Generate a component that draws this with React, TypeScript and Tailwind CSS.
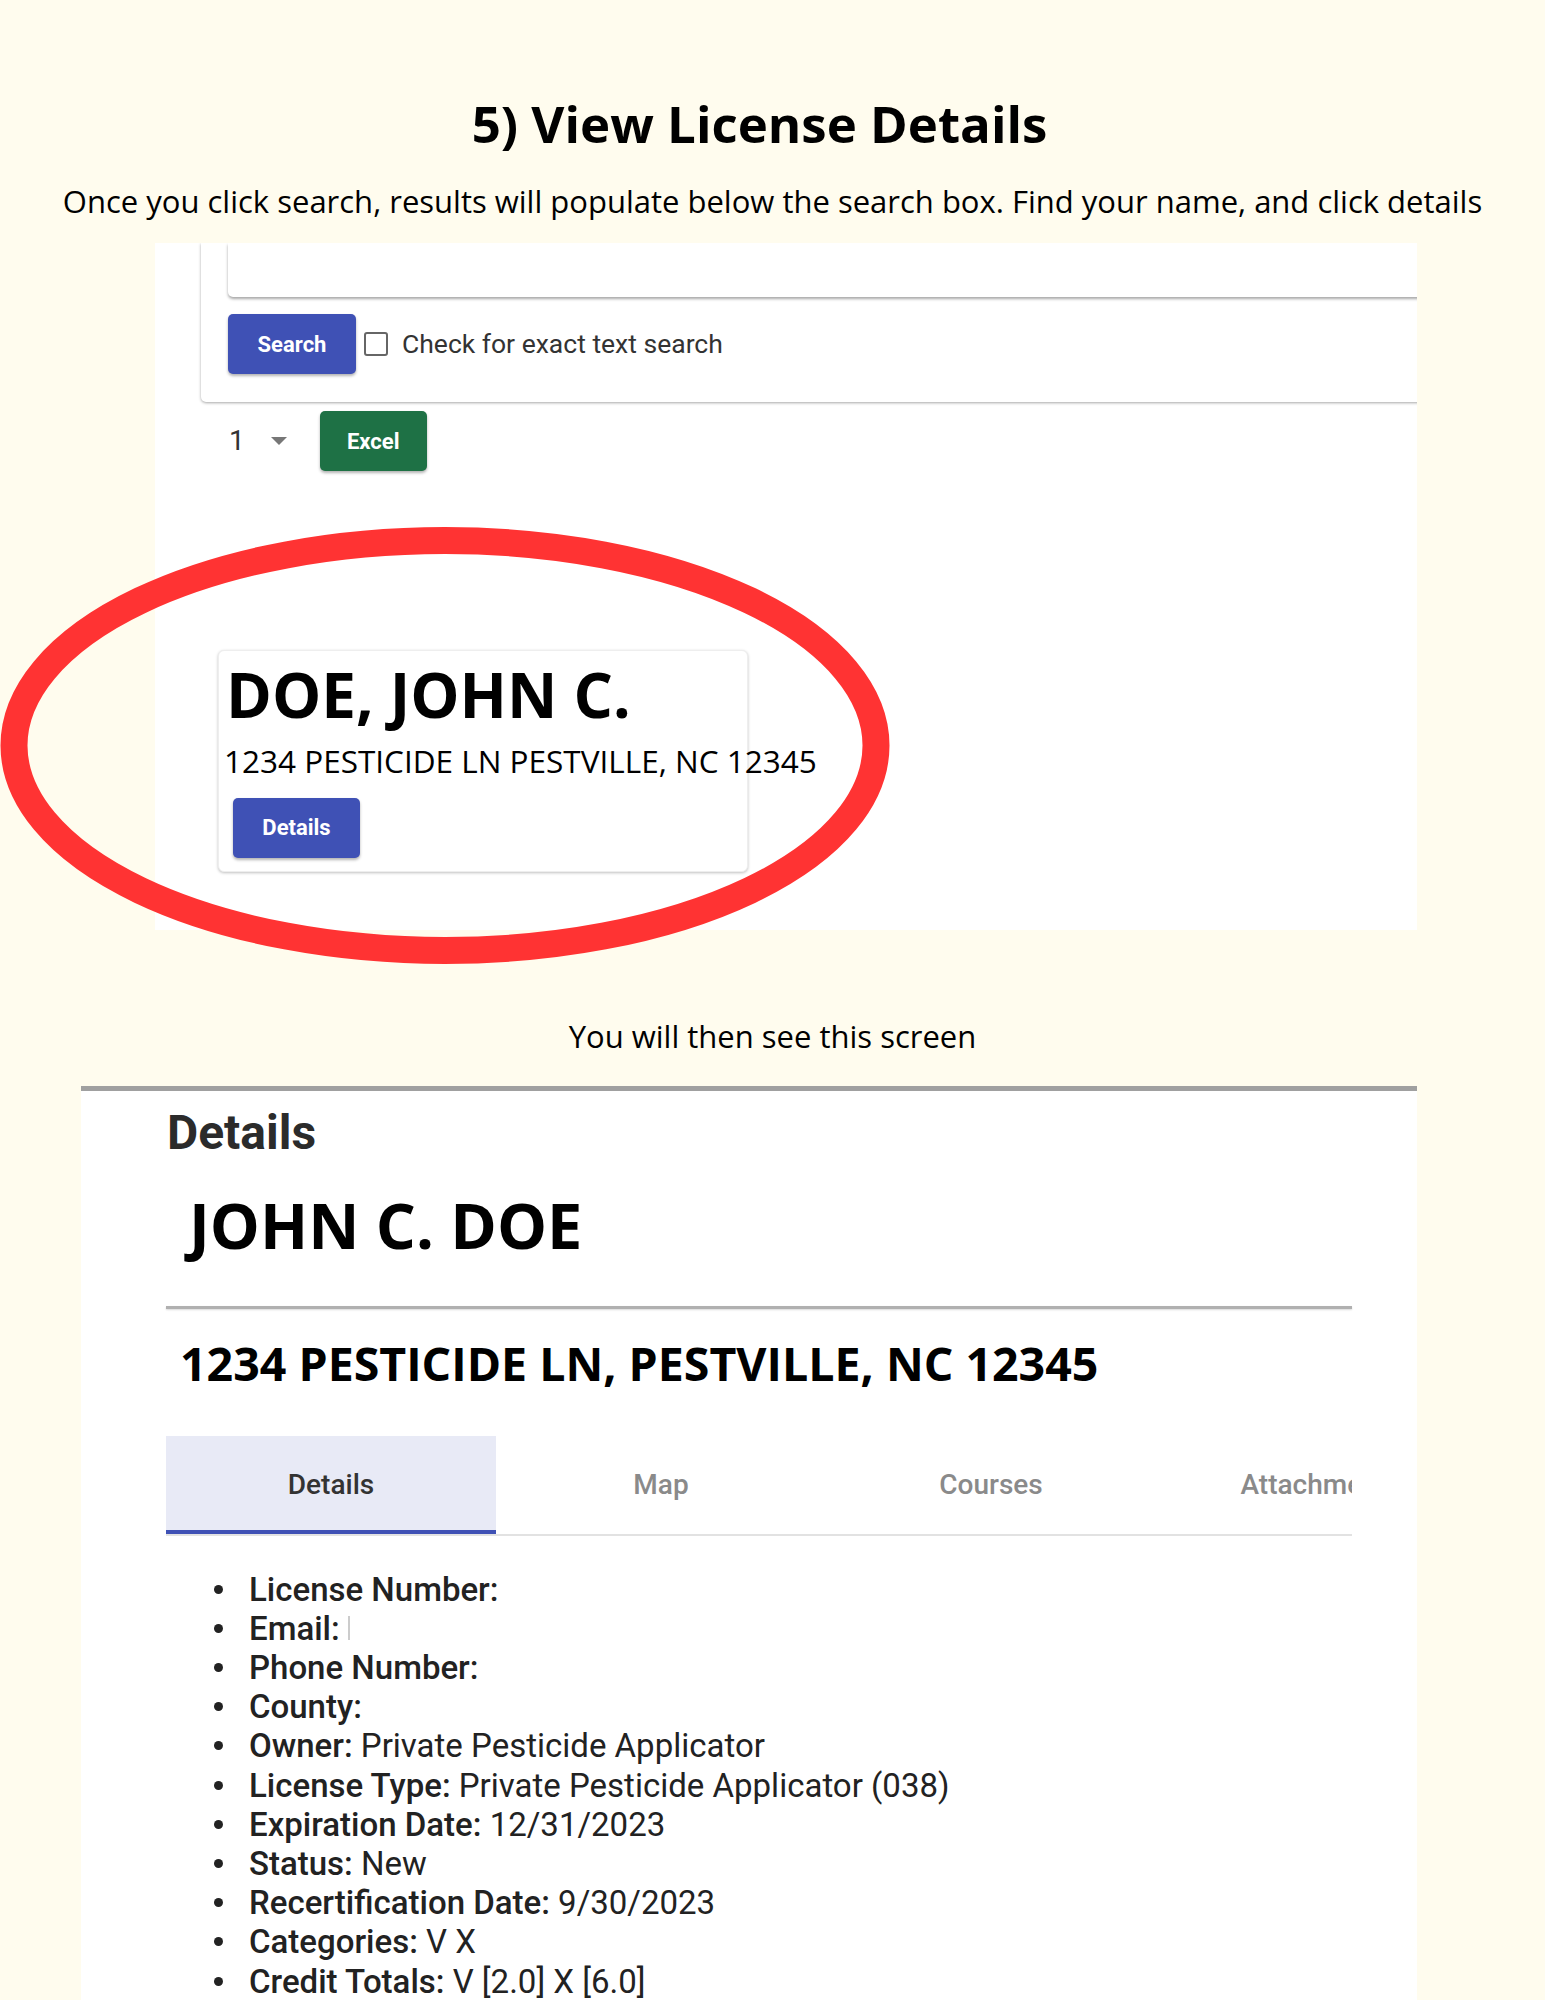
import React from "react";

const details: { label: string; value?: string; cursor?: boolean }[] = [
  { label: "License Number:" },
  { label: "Email:", cursor: true },
  { label: "Phone Number:" },
  { label: "County:" },
  { label: "Owner:", value: "Private Pesticide Applicator" },
  { label: "License Type:", value: "Private Pesticide Applicator (038)" },
  { label: "Expiration Date:", value: "12/31/2023" },
  { label: "Status:", value: "New" },
  { label: "Recertification Date:", value: "9/30/2023" },
  { label: "Categories:", value: "V X" },
  { label: "Credit Totals:", value: "V [2.0] X [6.0]" },
];

const tabs = ["Details", "Map", "Courses", "Attachments"];

function SearchScreenshot() {
  return (
    <div className="ml-[155px] w-[1262px] h-[687px] bg-white overflow-hidden font-['Roboto',sans-serif]">
      {/* search card, top cropped off */}
      <div className="ml-[46px] w-[1300px] rounded-b-[5px] bg-white pb-[28px] shadow-[0_1px_3px_rgba(0,0,0,0.35)]">
        <div className="ml-[27px] h-[54px] rounded-b-[5px] bg-white shadow-[0_2px_3px_rgba(0,0,0,0.35)]" />
        <div className="ml-[27px] mt-[17px] flex h-[60px] items-center">
          <button className="h-[60px] w-[128px] rounded-[5px] bg-[#3f51b5] text-[22px] font-bold text-white shadow-[0_2px_3px_rgba(0,0,0,0.3)]">
            Search
          </button>
          <span className="ml-[8px] h-[24px] w-[24px] rounded-[3px] border-[2.5px] border-[#666]" />
          <span className="ml-[14px] text-[26.5px] text-[#333]">Check for exact text search</span>
        </div>
      </div>

      <div className="mt-[9px] flex h-[60px] items-center">
        <span className="ml-[74px] text-[28px] text-[#333]">1</span>
        <svg className="ml-[26px]" width="16" height="8" viewBox="0 0 16 8">
          <path d="M0 0h16L8 8z" fill="#777" />
        </svg>
        <button className="ml-[33px] h-[60px] w-[107px] rounded-[5px] bg-[#1e7145] text-[22px] font-bold text-white shadow-[0_2px_3px_rgba(0,0,0,0.3)]">
          Excel
        </button>
      </div>

      {/* result card */}
      <div className="ml-[63px] mt-[179px] h-[222px] w-[530px] rounded-[6px] border border-[#eee] bg-white shadow-[0_1px_3px_rgba(0,0,0,0.25)]">
        <div className="whitespace-nowrap pl-[7px] pt-[12px] font-['Open_Sans',sans-serif] text-[62px] font-bold leading-none text-black">
          DOE, JOHN C.
        </div>
        <div className="mt-[20px] whitespace-nowrap pl-[5px] font-['Open_Sans',sans-serif] text-[31.5px] leading-none text-black">
          1234 PESTICIDE LN PESTVILLE, NC 12345
        </div>
        <button className="ml-[14px] mt-[21px] h-[60px] w-[127px] rounded-[5px] bg-[#3f51b5] text-[22px] font-bold text-white shadow-[0_2px_3px_rgba(0,0,0,0.3)]">
          Details
        </button>
      </div>
    </div>
  );
}

function DetailsScreenshot() {
  return (
    <div className="ml-[81px] h-[914px] w-[1336px] overflow-hidden border-t-[5px] border-[#a0a0a0] bg-white">
      <div className="ml-[86px] mt-[18px] font-['Roboto',sans-serif] text-[48px] font-bold leading-none text-[#2b2b2b]">
        Details
      </div>
      <div className="ml-[108px] mt-[36px] font-['Open_Sans',sans-serif] text-[63px] font-bold leading-none text-black">
        JOHN C. DOE
      </div>
      <div className="ml-[85px] mt-[50px] h-[3px] w-[1186px] bg-[#b0b0b0] shadow-[0_1px_2px_rgba(0,0,0,0.15)]" />
      <div className="ml-[99px] mt-[31px] whitespace-nowrap font-['Open_Sans',sans-serif] text-[46.5px] font-bold leading-none text-black">
        1234 PESTICIDE LN, PESTVILLE, NC 12345
      </div>

      <div className="ml-[85px] mt-[49px] flex h-[100px] w-[1186px] overflow-hidden border-b-2 border-[#e2e2e2] font-['Roboto',sans-serif]">
        {tabs.map((t, i) => (
          <div
            key={t}
            className={`flex h-full w-[330px] shrink-0 items-center justify-center text-[28px] font-medium ${
              i === 0 ? "border-b-4 border-[#3f51b5] bg-[#e8eaf6] pt-[4px] text-[#333]" : "text-[#8a8a8a]"
            }`}
          >
            {t}
          </div>
        ))}
      </div>

      <ul className="mt-[34px] font-['Roboto',sans-serif] text-[33px] leading-[39.2px] text-[#222]">
        {details.map((d) => (
          <li key={d.label} className="flex items-center">
            <span className="ml-[133px] h-[9px] w-[9px] rounded-full bg-[#222]" />
            <span className="ml-[26px] whitespace-nowrap">
              <span className="font-medium">{d.label}</span>
              {d.value ? ` ${d.value}` : ""}
            </span>
            {d.cursor && <span className="ml-[8px] h-[24px] w-[2px] bg-[#ccc]" />}
          </li>
        ))}
      </ul>
    </div>
  );
}

export default function App() {
  return (
    <div className="relative min-h-[2000px] w-full overflow-hidden bg-[#fffcee] font-['Open_Sans',sans-serif]">
      <h1 className="pr-[26px] pt-[98px] text-center text-[51px] font-bold leading-none text-black">
        5) View License Details
      </h1>
      <p className="mt-[37px] text-center text-[31px] leading-none text-black">
        Once you click search, results will populate below the search box. Find your name, and click details
      </p>

      <div className="mt-[26px]">
        <SearchScreenshot />
      </div>

      <p className="mt-[91px] text-center text-[31px] leading-none text-black">You will then see this screen</p>

      <div className="mt-[34px]">
        <DetailsScreenshot />
      </div>

      {/* red annotation ring */}
      <svg className="absolute left-0 top-[527px]" width="890" height="437" viewBox="0 0 890 437">
        <ellipse cx="445" cy="218.5" rx="431" ry="205" fill="none" stroke="#ff3333" strokeWidth="27" />
      </svg>
    </div>
  );
}
